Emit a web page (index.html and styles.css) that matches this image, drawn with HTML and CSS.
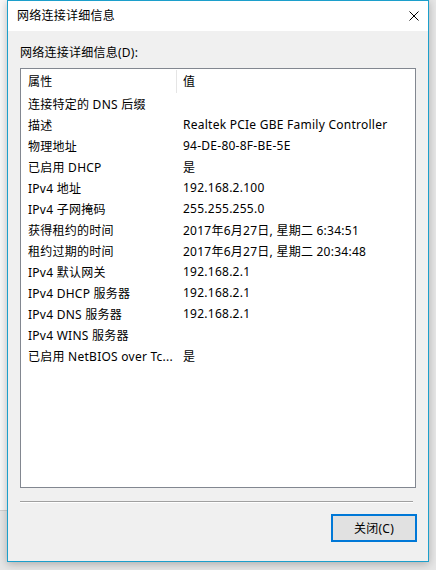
FILE: index.html
```html
<!DOCTYPE html>
<html>

<head>
  <meta charset="utf-8">
  <title>网络连接详细信息</title>
  <link rel="stylesheet" href="styles.css">
</head>

<body>
  <div class="desk-top"></div>
  <div class="window">
    <div class="titlebar">
      <span class="title">网络连接详细信息</span>
      <svg class="close" width="10" height="10" viewBox="0 0 10 10">
        <path d="M0.5 0.5 L9.5 9.5 M9.5 0.5 L0.5 9.5" stroke="#000" stroke-width="1" fill="none" />
      </svg>
    </div>
    <div class="content">
      <div class="label">网络连接详细信息(D):</div>
      <div class="listbox">
        <div class="row head">
          <div class="col1">属性</div>
          <div class="col2">值</div>
        </div>
        <div class="row">
          <div class="col1">连接特定的 DNS 后缀</div>
          <div class="col2"></div>
        </div>
        <div class="row">
          <div class="col1">描述</div>
          <div class="col2">Realtek PCIe GBE Family Controller</div>
        </div>
        <div class="row">
          <div class="col1">物理地址</div>
          <div class="col2">94-DE-80-8F-BE-5E</div>
        </div>
        <div class="row">
          <div class="col1">已启用 DHCP</div>
          <div class="col2">是</div>
        </div>
        <div class="row">
          <div class="col1">IPv4 地址</div>
          <div class="col2">192.168.2.100</div>
        </div>
        <div class="row">
          <div class="col1">IPv4 子网掩码</div>
          <div class="col2">255.255.255.0</div>
        </div>
        <div class="row">
          <div class="col1">获得租约的时间</div>
          <div class="col2">2017年6月27日, 星期二 6:34:51</div>
        </div>
        <div class="row">
          <div class="col1">租约过期的时间</div>
          <div class="col2">2017年6月27日, 星期二 20:34:48</div>
        </div>
        <div class="row">
          <div class="col1">IPv4 默认网关</div>
          <div class="col2">192.168.2.1</div>
        </div>
        <div class="row">
          <div class="col1">IPv4 DHCP 服务器</div>
          <div class="col2">192.168.2.1</div>
        </div>
        <div class="row">
          <div class="col1">IPv4 DNS 服务器</div>
          <div class="col2">192.168.2.1</div>
        </div>
        <div class="row">
          <div class="col1">IPv4 WINS 服务器</div>
          <div class="col2"></div>
        </div>
        <div class="row">
          <div class="col1">已启用 NetBIOS over Tc...</div>
          <div class="col2">是</div>
        </div>
      </div>
      <div class="sep"></div>
      <div class="buttons">
        <button class="btn">关闭(C)</button>
      </div>
    </div>
  </div>
</body>

</html>
```

FILE: styles.css
```css
body {
  margin: 0px;
  padding: 0px;
  width: 436px;
  height: 570px;
  overflow: hidden;
  background-color: #e6e6e6;
  font-family: "Noto Sans", "Noto Sans CJK SC", sans-serif;
  font-size: 12px;
  letter-spacing: 0.25px;
  color: #000000;
  position: relative;
}

.desk-top {
  position: absolute;
  left: 0px;
  top: 0px;
  width: 20px;
  height: 510px;
  background-color: #f7f7f7;
  border-bottom: 1px solid #cfcfcf;
}

.window {
  position: relative;
  margin-left: 7px;
  width: 420px;
  height: 560px;
  border: 1px solid #1c9fcb;
  background-color: #f0f0f0;
  box-shadow: 0px 2px 8px rgba(0, 0, 0, 0.25);
}

.titlebar {
  height: 30px;
  background-color: #ffffff;
  display: flex;
  align-items: center;
  padding-left: 9px;
  padding-right: 9px;
}

.title {
  flex: 1;
  line-height: 16px;
  margin-top: -1px;
}

.close {
  display: block;
  margin-top: -1px;
}

.content {
  padding: 0px 12px;
}

.label {
  padding-top: 14px;
  line-height: 16px;
  margin-bottom: 7px;
}

.listbox {
  height: 418px;
  border: 1px solid #828790;
  background-color: #ffffff;
}

.row {
  display: flex;
  height: 21px;
  align-items: center;
}

.row.head {
  height: 24px;
}

.col1 {
  width: 149px;
  padding-left: 7px;
  white-space: nowrap;
}

.col2 {
  flex: 1;
  padding-left: 6px;
  white-space: nowrap;
}

.head .col1 {
  height: 23px;
  line-height: 23px;
  width: 148px;
  border-right: 1px solid #e5e5e5;
}

.sep {
  margin-top: 13px;
  width: 393px;
  height: 1px;
  background-color: #a0a0a0;
  border-bottom: 1px solid #ffffff;
}

.buttons {
  display: flex;
  justify-content: flex-end;
  margin-top: 11px;
  margin-right: -1px;
}

.btn {
  width: 86px;
  height: 28px;
  border: 2px solid #0078d7;
  background-color: #e1e1e1;
  font-family: "Noto Sans", "Noto Sans CJK SC", sans-serif;
  font-size: 12px;
  letter-spacing: 0.25px;
  color: #000000;
  padding: 0px;
}
```
